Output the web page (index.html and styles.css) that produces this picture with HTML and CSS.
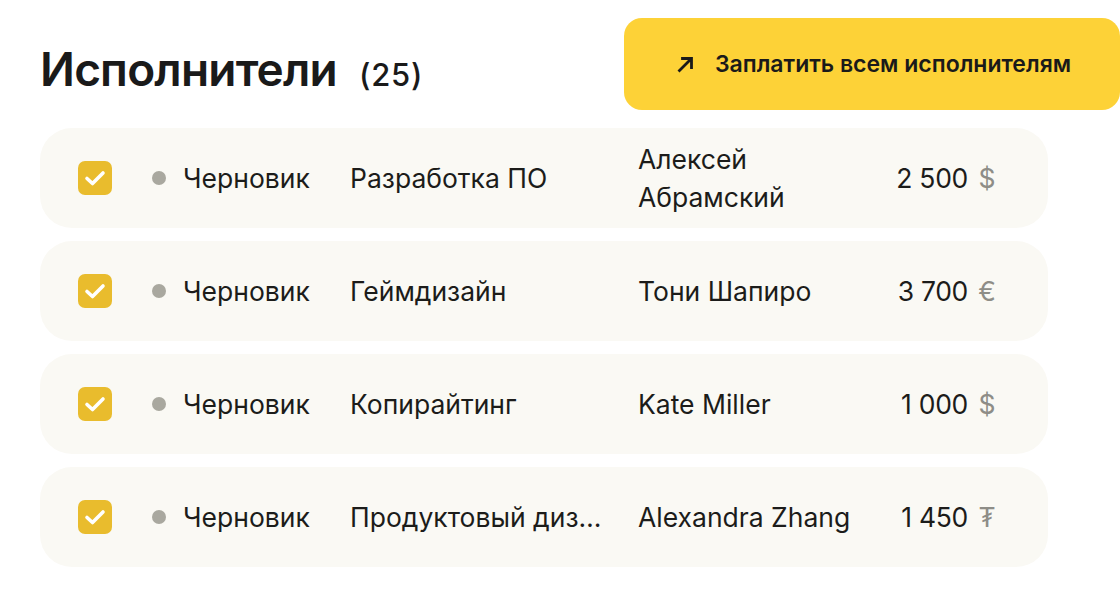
FILE: index.html
```html
<!DOCTYPE html>
<html lang="ru">
<head>
<meta charset="utf-8">
<link rel="stylesheet" href="styles.css">
</head>
<body>
<div class="page">
  <header class="header">
    <h1 class="title">Исполнители <span class="count">(25)</span></h1>
    <button class="pay-btn">
      <svg class="arrow" width="18" height="18" viewBox="0 0 18 18"><path d="M2.5 15.5 L14 4 M5.5 3.5 H14.5 V12.5" fill="none" stroke="#1a1a1a" stroke-width="2.8" stroke-linecap="square"/></svg>
      <span>Заплатить всем исполнителям</span>
    </button>
  </header>
  <div class="list">
    <div class="row">
      <div class="cell-check"><span class="check"><svg width="22" height="18" viewBox="0 0 22 18"><path d="M3 9.5 L8.5 14.5 L19 4" fill="none" stroke="#fff" stroke-width="3.6" stroke-linecap="round" stroke-linejoin="round"/></svg></span></div>
      <div class="status"><span class="dot"></span>Черновик</div>
      <div class="job">Разработка ПО</div>
      <div class="name">Алексей Абрамский</div>
      <div class="amount"><span class="num">2 500</span><span class="cur">$</span></div>
    </div>
    <div class="row">
      <div class="cell-check"><span class="check"><svg width="22" height="18" viewBox="0 0 22 18"><path d="M3 9.5 L8.5 14.5 L19 4" fill="none" stroke="#fff" stroke-width="3.6" stroke-linecap="round" stroke-linejoin="round"/></svg></span></div>
      <div class="status"><span class="dot"></span>Черновик</div>
      <div class="job">Геймдизайн</div>
      <div class="name">Тони Шапиро</div>
      <div class="amount"><span class="num">3 700</span><span class="cur">€</span></div>
    </div>
    <div class="row">
      <div class="cell-check"><span class="check"><svg width="22" height="18" viewBox="0 0 22 18"><path d="M3 9.5 L8.5 14.5 L19 4" fill="none" stroke="#fff" stroke-width="3.6" stroke-linecap="round" stroke-linejoin="round"/></svg></span></div>
      <div class="status"><span class="dot"></span>Черновик</div>
      <div class="job">Копирайтинг</div>
      <div class="name">Kate Miller</div>
      <div class="amount"><span class="num">1 000</span><span class="cur">$</span></div>
    </div>
    <div class="row">
      <div class="cell-check"><span class="check"><svg width="22" height="18" viewBox="0 0 22 18"><path d="M3 9.5 L8.5 14.5 L19 4" fill="none" stroke="#fff" stroke-width="3.6" stroke-linecap="round" stroke-linejoin="round"/></svg></span></div>
      <div class="status"><span class="dot"></span>Черновик</div>
      <div class="job">Продуктовый дизайн</div>
      <div class="name">Alexandra Zhang</div>
      <div class="amount"><span class="num">1 450</span><span class="cur">₮</span></div>
    </div>
  </div>
</div>
</body>
</html>
```
FILE: styles.css
```css
* { box-sizing: border-box; }
html, body { margin: 0; padding: 0; background: #fff; }
body {
  font-family: Inter, "Noto Sans", sans-serif;
  color: #1c1c1a;
  width: 1120px;
  height: 609px;
  overflow: hidden;
}
.page {
  padding: 18px 0 0 40px;
}
.header {
  display: flex;
  justify-content: space-between;
  align-items: center;
  height: 92px;
}
.title {
  margin: 0;
  padding-top: 10px;
  font-size: 46px;
  font-weight: 600;
  letter-spacing: -0.8px;
  color: #1a1a1a;
  display: flex;
  align-items: baseline;
  gap: 22px;
}
.count {
  font-size: 31px;
  font-weight: 500;
  letter-spacing: 0.8px;
}
.pay-btn {
  width: 496px;
  height: 92px;
  border: none;
  border-radius: 18px;
  background: #fdd237;
  display: flex;
  align-items: center;
  justify-content: center;
  gap: 20px;
  font-family: Inter, "Noto Sans", sans-serif;
  font-size: 23px;
  font-weight: 600;
  color: #1a1a1a;
  padding: 0 0 0 4px;
}
.arrow { flex: none; }
.list {
  width: 1008px;
  margin-top: 18px;
  display: flex;
  flex-direction: column;
  gap: 13px;
}
.row {
  height: 100px;
  background: #faf9f4;
  border-radius: 32px;
  display: grid;
  grid-template-columns: 74px 198px 288px 1fr auto;
  align-items: center;
  padding: 0 52px 0 38px;
  font-size: 26.5px;
  line-height: 38px;
  color: #1c1c1a;
}
.cell-check { display: flex; }
.check {
  width: 34px;
  height: 34px;
  border-radius: 7px;
  background: #e9bc2d;
  display: flex;
  align-items: center;
  justify-content: center;
}
.status {
  display: flex;
  align-items: center;
  gap: 17px;
}
.dot {
  width: 14px;
  height: 14px;
  border-radius: 50%;
  background: #a9a89f;
}
.job {
  white-space: nowrap;
  overflow: hidden;
  text-overflow: ellipsis;
  padding-right: 28px;
}
.name {
  max-width: 225px;
}
.amount {
  display: flex;
  align-items: center;
  gap: 10px;
}
.num { letter-spacing: -0.3px; }
.cur {
  color: #8e8d87;
  width: 18px;
  text-align: center;
}
```
